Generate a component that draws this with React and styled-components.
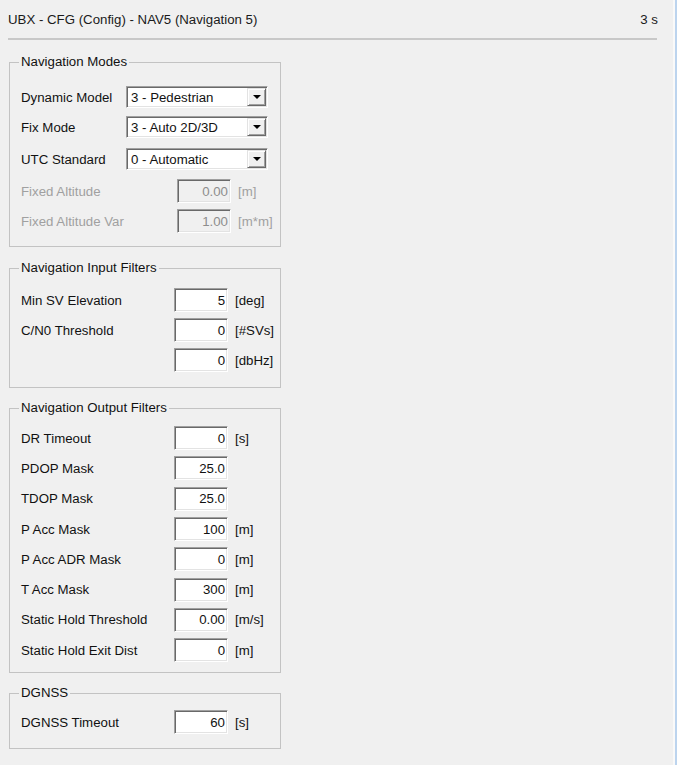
import React from 'react';
import styled, { createGlobalStyle } from 'styled-components';

const GlobalStyle = createGlobalStyle`
  html, body {
    margin: 0;
    padding: 0;
    background: #f0f0f0;
  }
  body {
    font-family: "Liberation Sans", Arial, sans-serif;
    font-size: 13.25px;
    color: #111;
  }
`;

const Window = styled.div`
  display: flex;
  width: 677px;
  height: 765px;
  overflow: hidden;
  background: #f0f0f0;
`;

const Content = styled.div`
  flex: 1;
  display: flex;
  flex-direction: column;
`;

const Edge = styled.div`
  width: 2px;
  background: #bcd4ee;
  border-left: 2px solid #f9f9f9;
`;

const TitleBar = styled.div`
  display: flex;
  justify-content: space-between;
  padding: 12px 15px 0 8px;
  line-height: 16px;
  color: #1a1a1a;
`;

const Separator = styled.div`
  margin: 10px 16px 0 8px;
  height: 2px;
  background: #c8c8c8;
`;

const Groups = styled.div`
  display: flex;
  flex-direction: column;
  padding-left: 9px;
`;

const Group = styled.fieldset`
  width: 272px;
  box-sizing: border-box;
  min-inline-size: 0;
  margin: ${p => p.$mt}px 0 0 0;
  padding: ${p => p.$pt}px 11px ${p => p.$pb}px;
  border: 1px solid #c3c3c3;
`;

const Legend = styled.legend`
  padding: 0 2px;
  margin-left: -2px;
  line-height: 16px;
`;

const Row = styled.div`
  display: flex;
  align-items: center;
  height: ${p => p.$h || 30}px;
`;

const Label = styled.span`
  flex: none;
  width: ${p => p.$w}px;
  white-space: nowrap;
  color: ${p => (p.$disabled ? '#a0a0a0' : '#111')};
`;

const Edit = styled.input`
  width: 54px;
  height: 24px;
  box-sizing: border-box;
  margin: 0;
  padding: 0 2px;
  font: inherit;
  text-align: right;
  outline: none;
  background: ${p => (p.disabled ? '#f0f0f0' : '#fff')};
  color: ${p => (p.disabled ? '#8d8d8d' : '#111')};
  border: 1px solid;
  border-color: #a0a0a0 #fff #fff #a0a0a0;
  box-shadow: inset 1px 1px 0 #696969, inset -1px -1px 0 #e3e3e3;
  &:disabled {
    -webkit-text-fill-color: #8d8d8d;
  }
`;

const Unit = styled.span`
  margin-left: 7px;
  white-space: nowrap;
  color: ${p => (p.$disabled ? '#a0a0a0' : '#111')};
`;

const Combo = styled.div`
  display: flex;
  align-items: stretch;
  width: 142px;
  height: 22px;
  box-sizing: border-box;
  padding: 1px;
  background: #fff;
  border: 1px solid;
  border-color: #a0a0a0 #fff #fff #a0a0a0;
  box-shadow: inset 1px 1px 0 #696969, inset -1px -1px 0 #e3e3e3;
`;

const ComboText = styled.span`
  flex: 1;
  padding-left: 3px;
  line-height: 19px;
  white-space: nowrap;
`;

const DropButton = styled.div`
  width: 19px;
  box-sizing: border-box;
  display: flex;
  align-items: center;
  justify-content: center;
  background: #f0f0f0;
  border: 1px solid;
  border-color: #e3e3e3 #696969 #696969 #e3e3e3;
  box-shadow: inset 1px 1px 0 #fff, inset -1px -1px 0 #a0a0a0;
  &::after {
    content: '';
    border-left: 4px solid transparent;
    border-right: 4px solid transparent;
    border-top: 4px solid #000;
  }
`;

const modes = [
  { label: 'Dynamic Model', value: '3 - Pedestrian' },
  { label: 'Fix Mode', value: '3 - Auto 2D/3D' },
  { label: 'UTC Standard', value: '0 - Automatic', h: 34 },
];

const fixed = [
  { label: 'Fixed Altitude', value: '0.00', unit: '[m]' },
  { label: 'Fixed Altitude Var', value: '1.00', unit: '[m*m]' },
];

const inputFilters = [
  { label: 'Min SV Elevation', value: '5', unit: '[deg]' },
  { label: 'C/N0 Threshold', value: '0', unit: '[#SVs]' },
  { label: '', value: '0', unit: '[dbHz]' },
];

const outputFilters = [
  { label: 'DR Timeout', value: '0', unit: '[s]' },
  { label: 'PDOP Mask', value: '25.0' },
  { label: 'TDOP Mask', value: '25.0' },
  { label: 'P Acc Mask', value: '100', unit: '[m]' },
  { label: 'P Acc ADR Mask', value: '0', unit: '[m]' },
  { label: 'T Acc Mask', value: '300', unit: '[m]' },
  { label: 'Static Hold Threshold', value: '0.00', unit: '[m/s]' },
  { label: 'Static Hold Exit Dist', value: '0', unit: '[m]' },
];

function Field({ item, w = 153, h, disabled }) {
  return (
    <Row $h={h}>
      <Label $w={w} $disabled={disabled}>{item.label}</Label>
      <Edit value={item.value} readOnly disabled={disabled} />
      {item.unit && <Unit $disabled={disabled}>{item.unit}</Unit>}
    </Row>
  );
}

export default function App() {
  return (
    <>
      <GlobalStyle />
      <Window>
        <Content>
          <TitleBar>
            <span>UBX - CFG (Config) - NAV5 (Navigation 5)</span>
            <span>3 s</span>
          </TitleBar>
          <Separator />
          <Groups>
            <Group $mt={14} $pt={12} $pb={10}>
              <Legend>Navigation Modes</Legend>
              {modes.map(m => (
                <Row key={m.label} $h={m.h}>
                  <Label $w={105}>{m.label}</Label>
                  <Combo>
                    <ComboText>{m.value}</ComboText>
                    <DropButton />
                  </Combo>
                </Row>
              ))}
              {fixed.map(f => (
                <Field key={f.label} item={f} w={156} disabled />
              ))}
            </Group>

            <Group $mt={13} $pt={9} $pb={12}>
              <Legend>Navigation Input Filters</Legend>
              {inputFilters.map((f, i) => (
                <Field key={i} item={f} />
              ))}
            </Group>

            <Group $mt={12} $pt={7} $pb={7}>
              <Legend>Navigation Output Filters</Legend>
              {outputFilters.map(f => (
                <Field key={f.label} item={f} h={30.3} />
              ))}
            </Group>

            <Group $mt={12} $pt={6} $pb={11}>
              <Legend>DGNSS</Legend>
              <Field item={{ label: 'DGNSS Timeout', value: '60', unit: '[s]' }} />
            </Group>
          </Groups>
        </Content>
        <Edge />
      </Window>
    </>
  );
}
